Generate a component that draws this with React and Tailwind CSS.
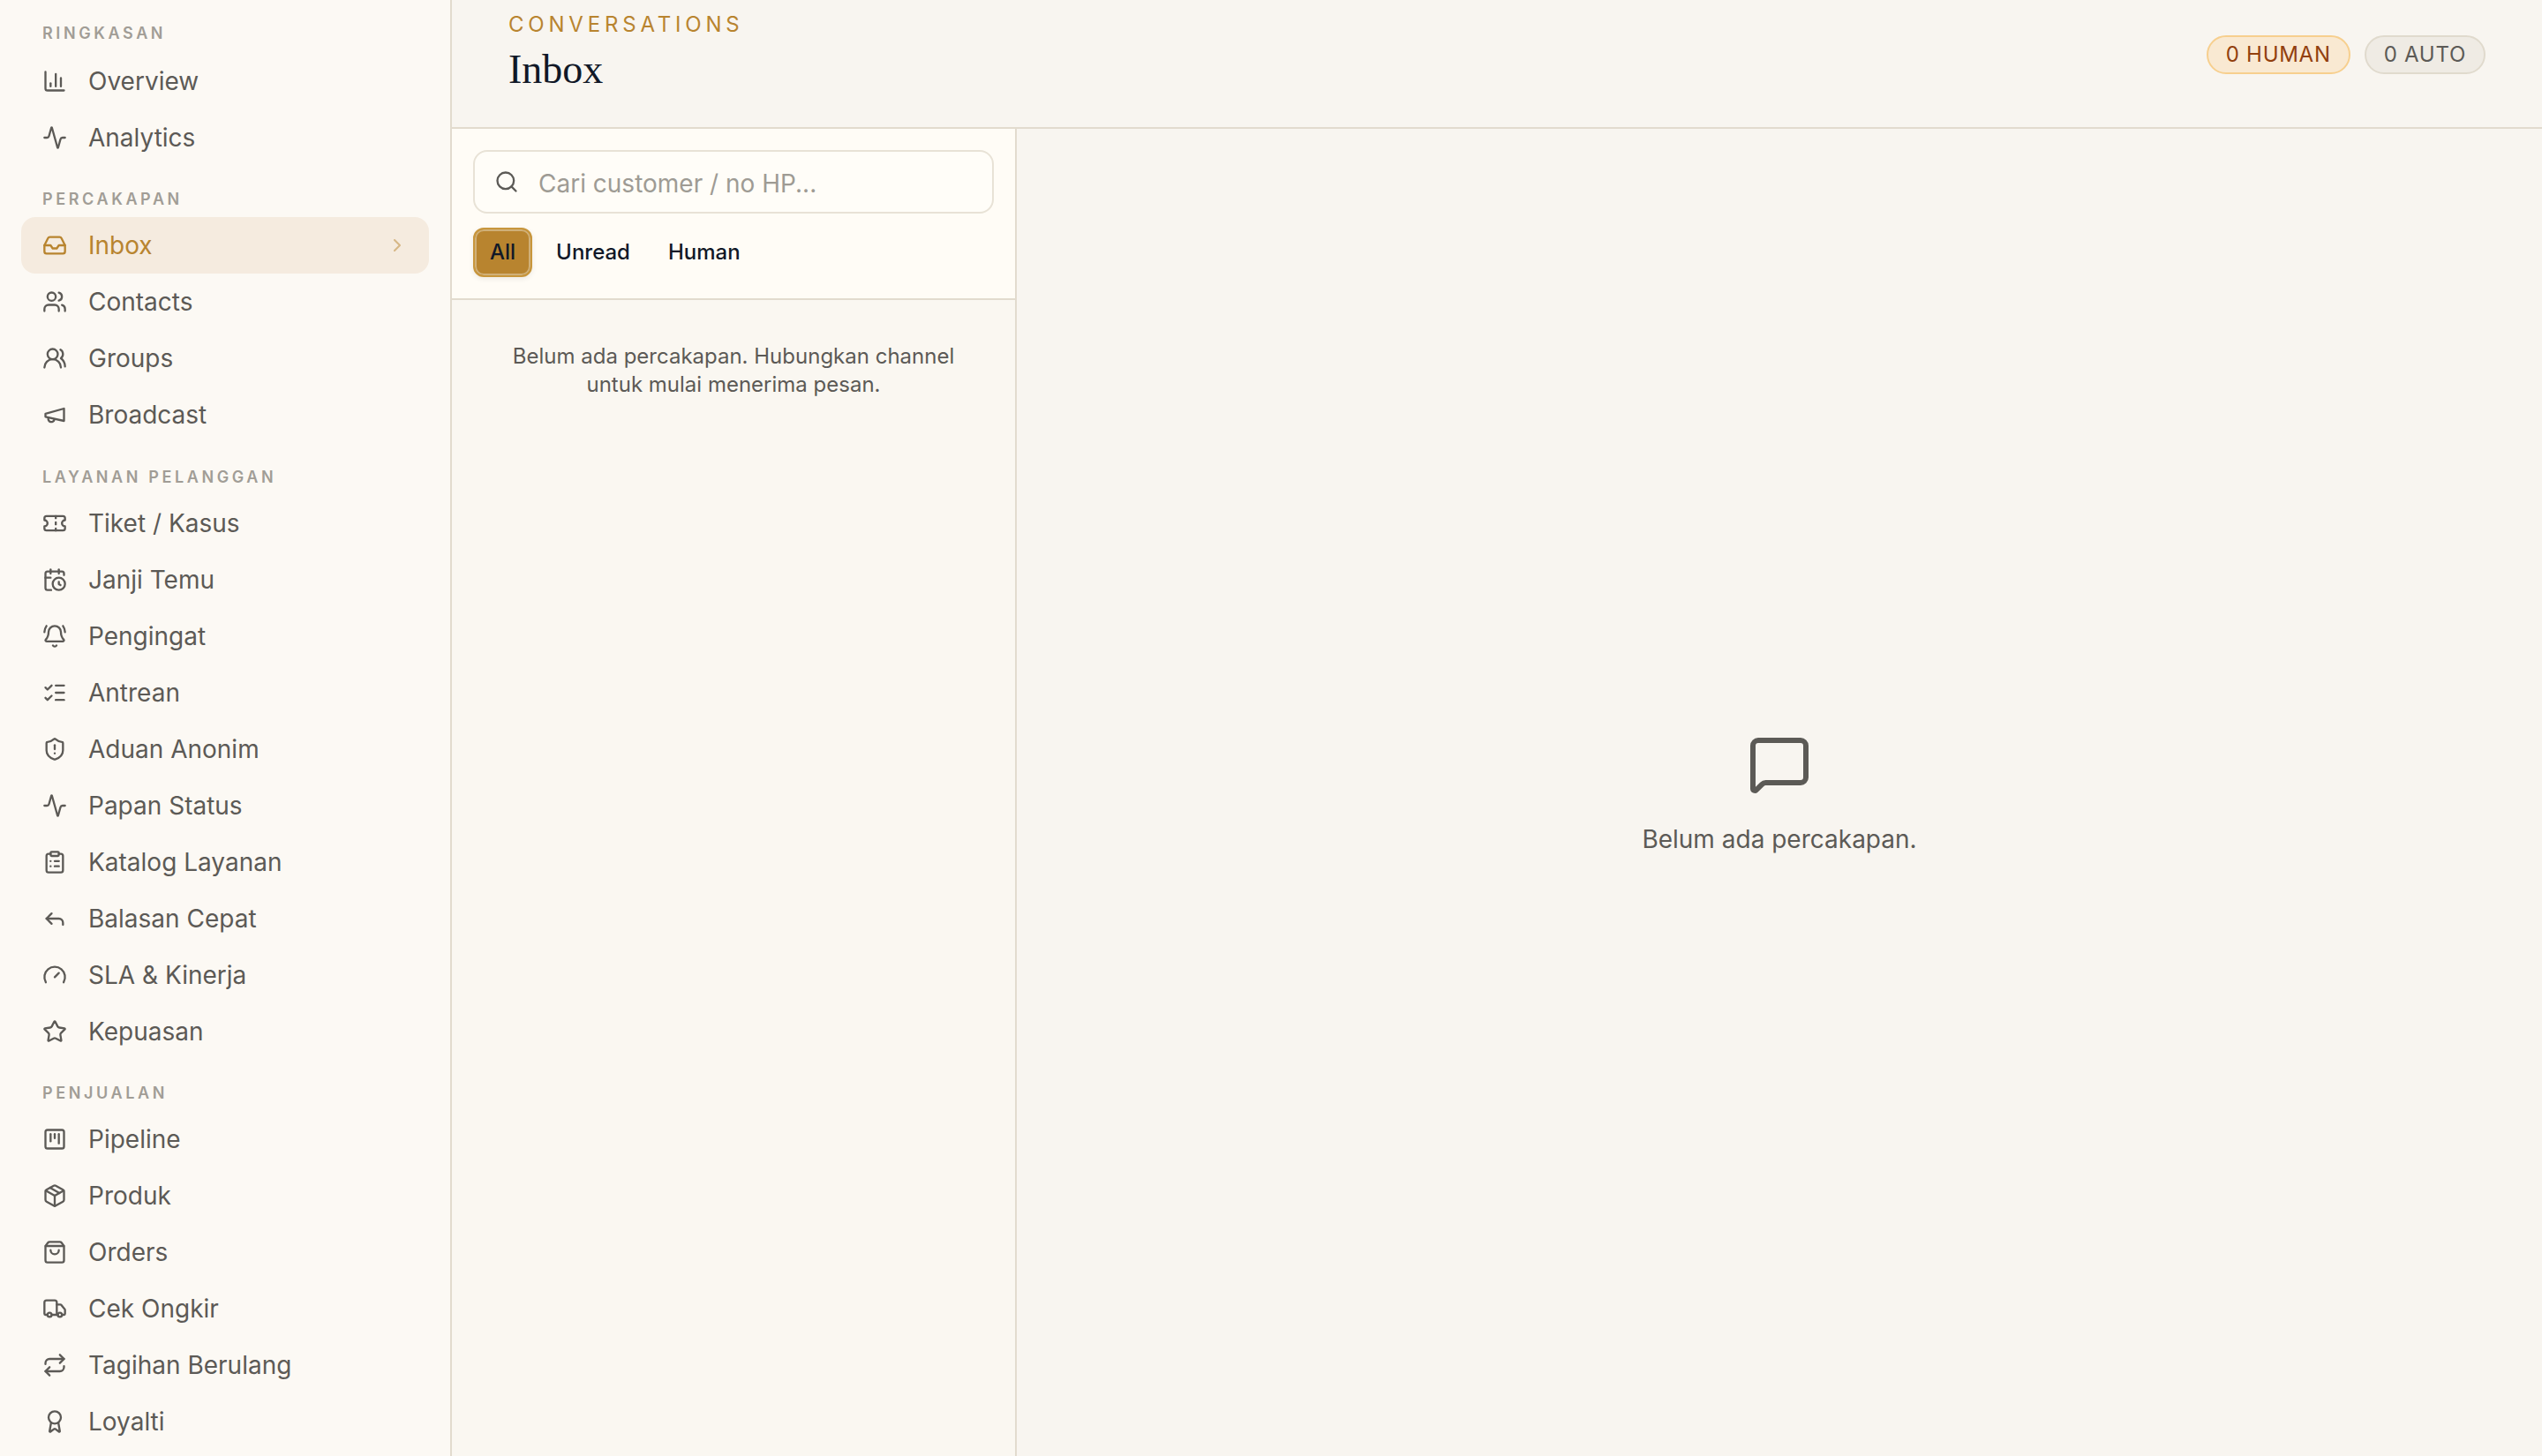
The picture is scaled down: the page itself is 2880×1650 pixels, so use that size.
import React from "react";
import {
  ChartColumn, Activity, Inbox, Users, UsersRound, Ticket, CalendarClock, BellRing,
  ListChecks, ShieldAlert, ClipboardList, Reply, Gauge, Star, SquareKanban, Package, ShoppingBag,
  Truck, Repeat, Award, ChevronRight, Search, MessageSquare,
} from "lucide-react";

function Megaphone({ size, strokeWidth, className }) {
  return (
    <svg width={size} height={size} viewBox="0 0 24 24" fill="none" stroke="currentColor" strokeWidth={strokeWidth} strokeLinecap="round" strokeLinejoin="round" className={className}>
      <path d="m3 11 18-5v12L3 14v-3z" />
      <path d="M11.6 16.8a3 3 0 1 1-5.8-1.6" />
    </svg>
  );
}

const sections = [
  { title: "Ringkasan", gap: "mb-[23px]", labelGap: "mb-[7px]", items: [["Overview", ChartColumn], ["Analytics", Activity]] },
  { title: "Percakapan", gap: "mb-6", labelGap: "mb-[5px]", items: [["Inbox", Inbox, true], ["Contacts", Users], ["Groups", UsersRound], ["Broadcast", Megaphone]] },
  { title: "Layanan Pelanggan", gap: "mb-[23px]", labelGap: "mb-[5px]", items: [["Tiket / Kasus", Ticket], ["Janji Temu", CalendarClock], ["Pengingat", BellRing], ["Antrean", ListChecks], ["Aduan Anonim", ShieldAlert], ["Papan Status", Activity], ["Katalog Layanan", ClipboardList], ["Balasan Cepat", Reply], ["SLA & Kinerja", Gauge], ["Kepuasan", Star]] },
  { title: "Penjualan", gap: "mb-[23px]", labelGap: "mb-[5px]", items: [["Pipeline", SquareKanban], ["Produk", Package], ["Orders", ShoppingBag], ["Cek Ongkir", Truck], ["Tagihan Berulang", Repeat], ["Loyalti", Award]] },
];

function NavItem({ label, icon: Icon, active }) {
  return (
    <div className={`flex h-16 items-center gap-6 rounded-2xl px-6 text-[28px] ${active ? "bg-[#f5ebdf] text-[#b8842f]" : "text-[#5c5a56]"}`}>
      <Icon size={28} strokeWidth={2} className="shrink-0" />
      <span className="flex-1">{label}</span>
      {active && <ChevronRight size={24} strokeWidth={2} className="opacity-50" />}
    </div>
  );
}

export default function App() {
  return (
    <div className="flex h-screen overflow-hidden bg-[#f8f5f0] font-['Inter',sans-serif] text-[#111827]">
      <aside className="w-[512px] shrink-0 overflow-hidden border-r-2 border-[#e2dbce] bg-[#fcf9f4] px-6 pt-[23px]">
        {sections.map((s) => (
          <section key={s.title} className={s.gap}>
            <h2 className={`${s.labelGap} px-6 text-[18px] leading-[30px] font-semibold tracking-[0.2em] text-[#a19d96] uppercase`}>{s.title}</h2>
            {s.items.map(([label, icon, active]) => (
              <NavItem key={label} label={label} icon={icon} active={active} />
            ))}
          </section>
        ))}
      </aside>

      <main className="flex min-w-0 flex-1 flex-col">
        <header className="flex h-[146px] shrink-0 items-start justify-between border-b-2 border-[#e2dbce] px-16">
          <div className="pt-3">
            <p className="text-[24px] leading-[32px] tracking-[0.2em] text-[#b8842f] uppercase">Conversations</p>
            <h1 className="mt-[5px] font-['Liberation_Serif',serif] text-[46px] leading-[60px] text-[#111827]">Inbox</h1>
          </div>
          <div className="flex gap-4 pt-10">
            <span className="flex h-11 items-center rounded-full border-2 border-[#f7cf8e] bg-[#f9e9d2] px-5 text-[24px] tracking-[0.03em] text-[#92400e]">0 HUMAN</span>
            <span className="flex h-11 items-center rounded-full border-2 border-[#e0dacd] bg-[#efebe4] px-5 text-[24px] tracking-[0.03em] text-[#5c5a56]">0 AUTO</span>
          </div>
        </header>

        <div className="flex min-h-0 flex-1">
          <div className="flex w-[640px] shrink-0 flex-col border-r-2 border-[#e2dbce] bg-[#faf7f1]">
            <div className="h-[194px] shrink-0 border-b-2 border-[#e2dbce] bg-[#fffcf6] px-6 pt-6">
              <div className="flex h-[72px] items-center gap-[22px] rounded-2xl border-2 border-[#e8e2d6] bg-[#fffdf8] px-[22px]">
                <Search size={28} strokeWidth={2} className="shrink-0 text-[#5c5a56]" />
                <input placeholder="Cari customer / no HP..." className="min-w-0 flex-1 bg-transparent pt-[3px] text-[28px] outline-none placeholder:text-[#9e9b94]" />
              </div>
              <div className="mt-4 flex gap-[9px] text-[24px] font-medium">
                <button className="h-14 rounded-xl border-2 border-[#c8963c] bg-[#b8842f] px-[17px] text-[#111827] shadow-[inset_0_0_0_2px_#d0b078,0_2px_6px_rgba(0,0,0,0.08)]">All</button>
                <button className="h-14 pr-4 pl-[18px]">Unread</button>
                <button className="h-14 px-[18px]">Human</button>
              </div>
            </div>
            <p className="px-12 pt-12 text-center text-[24px] leading-8 text-[#5c5a56]">Belum ada percakapan. Hubungkan channel untuk mulai menerima pesan.</p>
          </div>

          <div className="flex flex-1 flex-col items-center justify-center pt-1 text-[#5c5a56]">
            <MessageSquare size={72} strokeWidth={2} />
            <p className="mt-[29px] text-[28px] leading-10">Belum ada percakapan.</p>
          </div>
        </div>
      </main>
    </div>
  );
}
